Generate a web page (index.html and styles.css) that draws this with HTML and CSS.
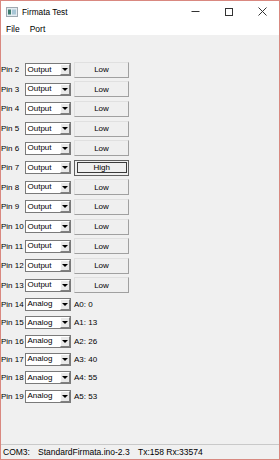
FILE: index.html
```html
<!DOCTYPE html>
<html>
<head>
  <meta charset="UTF-8">
  <link rel="stylesheet" href="styles.css">
</head>
<body>
  <div class="window">
    <div class="titlebar">
      <svg class="app-icon" width="12" height="10" viewBox="0 0 12 10">
        <rect x="0.5" y="0.5" width="11" height="9" fill="#e4ecf1" stroke="#9ea8b0"/>
        <rect x="2" y="2.5" width="3" height="5" fill="#3f7d6e"/>
        <rect x="6" y="2.5" width="4" height="5" fill="#a8c6d6"/>
      </svg>
      <span class="title">Firmata Test</span>
      <div class="window-controls">
        <div class="control">
          <svg width="9" height="9" viewBox="0 0 9 9"><path d="M0.5 4.5h8" stroke="#333" stroke-width="1"/></svg>
        </div>
        <div class="control">
          <svg width="9" height="9" viewBox="0 0 9 9"><rect x="1.5" y="1.5" width="7" height="7" fill="none" stroke="#333" stroke-width="1"/></svg>
        </div>
        <div class="control">
          <svg width="9" height="9" viewBox="0 0 9 9"><path d="M0.5 0.5l8 8M8.5 0.5l-8 8" stroke="#333" stroke-width="1"/></svg>
        </div>
      </div>
    </div>

    <div class="menubar">
      <span class="menu-item">File</span>
      <span class="menu-item">Port</span>
    </div>

    <div class="pins">
      <div class="pin-row"><span class="pin-label">Pin 2</span><div class="combo"><span class="combo-value">Output</span><span class="combo-drop"></span></div><button class="toggle">Low</button></div>
      <div class="pin-row"><span class="pin-label">Pin 3</span><div class="combo"><span class="combo-value">Output</span><span class="combo-drop"></span></div><button class="toggle">Low</button></div>
      <div class="pin-row"><span class="pin-label">Pin 4</span><div class="combo"><span class="combo-value">Output</span><span class="combo-drop"></span></div><button class="toggle">Low</button></div>
      <div class="pin-row"><span class="pin-label">Pin 5</span><div class="combo"><span class="combo-value">Output</span><span class="combo-drop"></span></div><button class="toggle">Low</button></div>
      <div class="pin-row"><span class="pin-label">Pin 6</span><div class="combo"><span class="combo-value">Output</span><span class="combo-drop"></span></div><button class="toggle">Low</button></div>
      <div class="pin-row"><span class="pin-label">Pin 7</span><div class="combo"><span class="combo-value">Output</span><span class="combo-drop"></span></div><button class="toggle on"><span>High</span></button></div>
      <div class="pin-row"><span class="pin-label">Pin 8</span><div class="combo"><span class="combo-value">Output</span><span class="combo-drop"></span></div><button class="toggle">Low</button></div>
      <div class="pin-row"><span class="pin-label">Pin 9</span><div class="combo"><span class="combo-value">Output</span><span class="combo-drop"></span></div><button class="toggle">Low</button></div>
      <div class="pin-row"><span class="pin-label">Pin 10</span><div class="combo"><span class="combo-value">Output</span><span class="combo-drop"></span></div><button class="toggle">Low</button></div>
      <div class="pin-row"><span class="pin-label">Pin 11</span><div class="combo"><span class="combo-value">Output</span><span class="combo-drop"></span></div><button class="toggle">Low</button></div>
      <div class="pin-row"><span class="pin-label">Pin 12</span><div class="combo"><span class="combo-value">Output</span><span class="combo-drop"></span></div><button class="toggle">Low</button></div>
      <div class="pin-row"><span class="pin-label">Pin 13</span><div class="combo"><span class="combo-value">Output</span><span class="combo-drop"></span></div><button class="toggle">Low</button></div>

      <div class="pin-row analog"><span class="pin-label">Pin 14</span><div class="combo"><span class="combo-value">Analog</span><span class="combo-drop"></span></div><span class="analog-value">A0: 0</span></div>
      <div class="pin-row analog"><span class="pin-label">Pin 15</span><div class="combo"><span class="combo-value">Analog</span><span class="combo-drop"></span></div><span class="analog-value">A1: 13</span></div>
      <div class="pin-row analog"><span class="pin-label">Pin 16</span><div class="combo"><span class="combo-value">Analog</span><span class="combo-drop"></span></div><span class="analog-value">A2: 26</span></div>
      <div class="pin-row analog"><span class="pin-label">Pin 17</span><div class="combo"><span class="combo-value">Analog</span><span class="combo-drop"></span></div><span class="analog-value">A3: 40</span></div>
      <div class="pin-row analog"><span class="pin-label">Pin 18</span><div class="combo"><span class="combo-value">Analog</span><span class="combo-drop"></span></div><span class="analog-value">A4: 55</span></div>
      <div class="pin-row analog"><span class="pin-label">Pin 19</span><div class="combo"><span class="combo-value">Analog</span><span class="combo-drop"></span></div><span class="analog-value">A5: 53</span></div>
    </div>

    <div class="statusbar">
      <span class="status-port">COM3:</span>
      <span class="status-firmware">StandardFirmata.ino-2.3</span>
      <span class="status-traffic">Tx:158 Rx:33574</span>
    </div>
  </div>
</body>
</html>
```

FILE: styles.css
```css
* {
  box-sizing: border-box;
}

body {
  width: 280px;
  height: 460px;
  margin: 0;
  font-family: "Liberation Sans", Arial, sans-serif;
  font-size: 8px;
  color: #000000;
  background: #f0f0f0;
}

.window {
  width: 280px;
  height: 460px;
  border: 1px solid #d98880;
  display: flex;
  flex-direction: column;
  background: #f0f0f0;
}

.titlebar {
  height: 21px;
  background: #ffffff;
  display: flex;
  align-items: center;
  flex-shrink: 0;
}

.app-icon {
  margin-left: 5px;
}

.title {
  margin-left: 4px;
  font-size: 8.3px;
}

.window-controls {
  margin-left: auto;
  display: flex;
  height: 100%;
}

.control {
  width: 33.5px;
  display: flex;
  align-items: center;
  justify-content: center;
}

.menubar {
  height: 13px;
  background: #ffffff;
  display: flex;
  align-items: center;
  gap: 10px;
  padding-left: 5px;
  font-size: 8.5px;
  flex-shrink: 0;
}

.pins {
  flex: 1;
  padding-top: 25px;
  display: flex;
  flex-direction: column;
}

.pin-row {
  display: grid;
  grid-template-columns: 24px 49px 55px;
  align-items: center;
  height: 19.6px;
  flex-shrink: 0;
}

.pin-row.analog {
  height: 18.4px;
}

.pin-label {
  white-space: nowrap;
}

.combo {
  width: 46px;
  height: 13px;
  border: 1px solid #7a7a7a;
  background: #ffffff;
  display: flex;
  align-items: center;
}

.combo-value {
  flex: 1;
  padding-left: 1.5px;
  line-height: 1;
}

.combo-drop {
  width: 10px;
  height: 100%;
  margin-right: 0.5px;
  background: #e9e9e9;
  border: 1px solid;
  border-color: #ffffff #7f7f7f #7f7f7f #ffffff;
  display: flex;
  align-items: center;
  justify-content: center;
}

.combo-drop::after {
  content: '';
  border-left: 3px solid transparent;
  border-right: 3px solid transparent;
  border-top: 3px solid #000000;
}

.toggle {
  width: 55px;
  height: 16px;
  padding: 0;
  border: 1px solid;
  border-color: #e0e0e0 #a0a0a0 #a0a0a0 #e0e0e0;
  background: #efefef;
  font-family: inherit;
  font-size: 8px;
  color: #000000;
  display: flex;
  align-items: center;
  justify-content: center;
}

.toggle.on {
  border-color: #5f5f5f;
  padding: 1.5px 1.5px 1.5px 2px;
}

.toggle.on span {
  flex: 1;
  align-self: stretch;
  border: 1px solid #3a3a3a;
  display: flex;
  align-items: center;
  justify-content: center;
}

.analog-value {
  white-space: nowrap;
}

.statusbar {
  height: 15px;
  border-top: 1px solid #c9c9c9;
  display: flex;
  align-items: center;
  padding-left: 2px;
  font-size: 8.5px;
  flex-shrink: 0;
}

.status-port {
  width: 35px;
}

.status-firmware {
  width: 100px;
}
```
